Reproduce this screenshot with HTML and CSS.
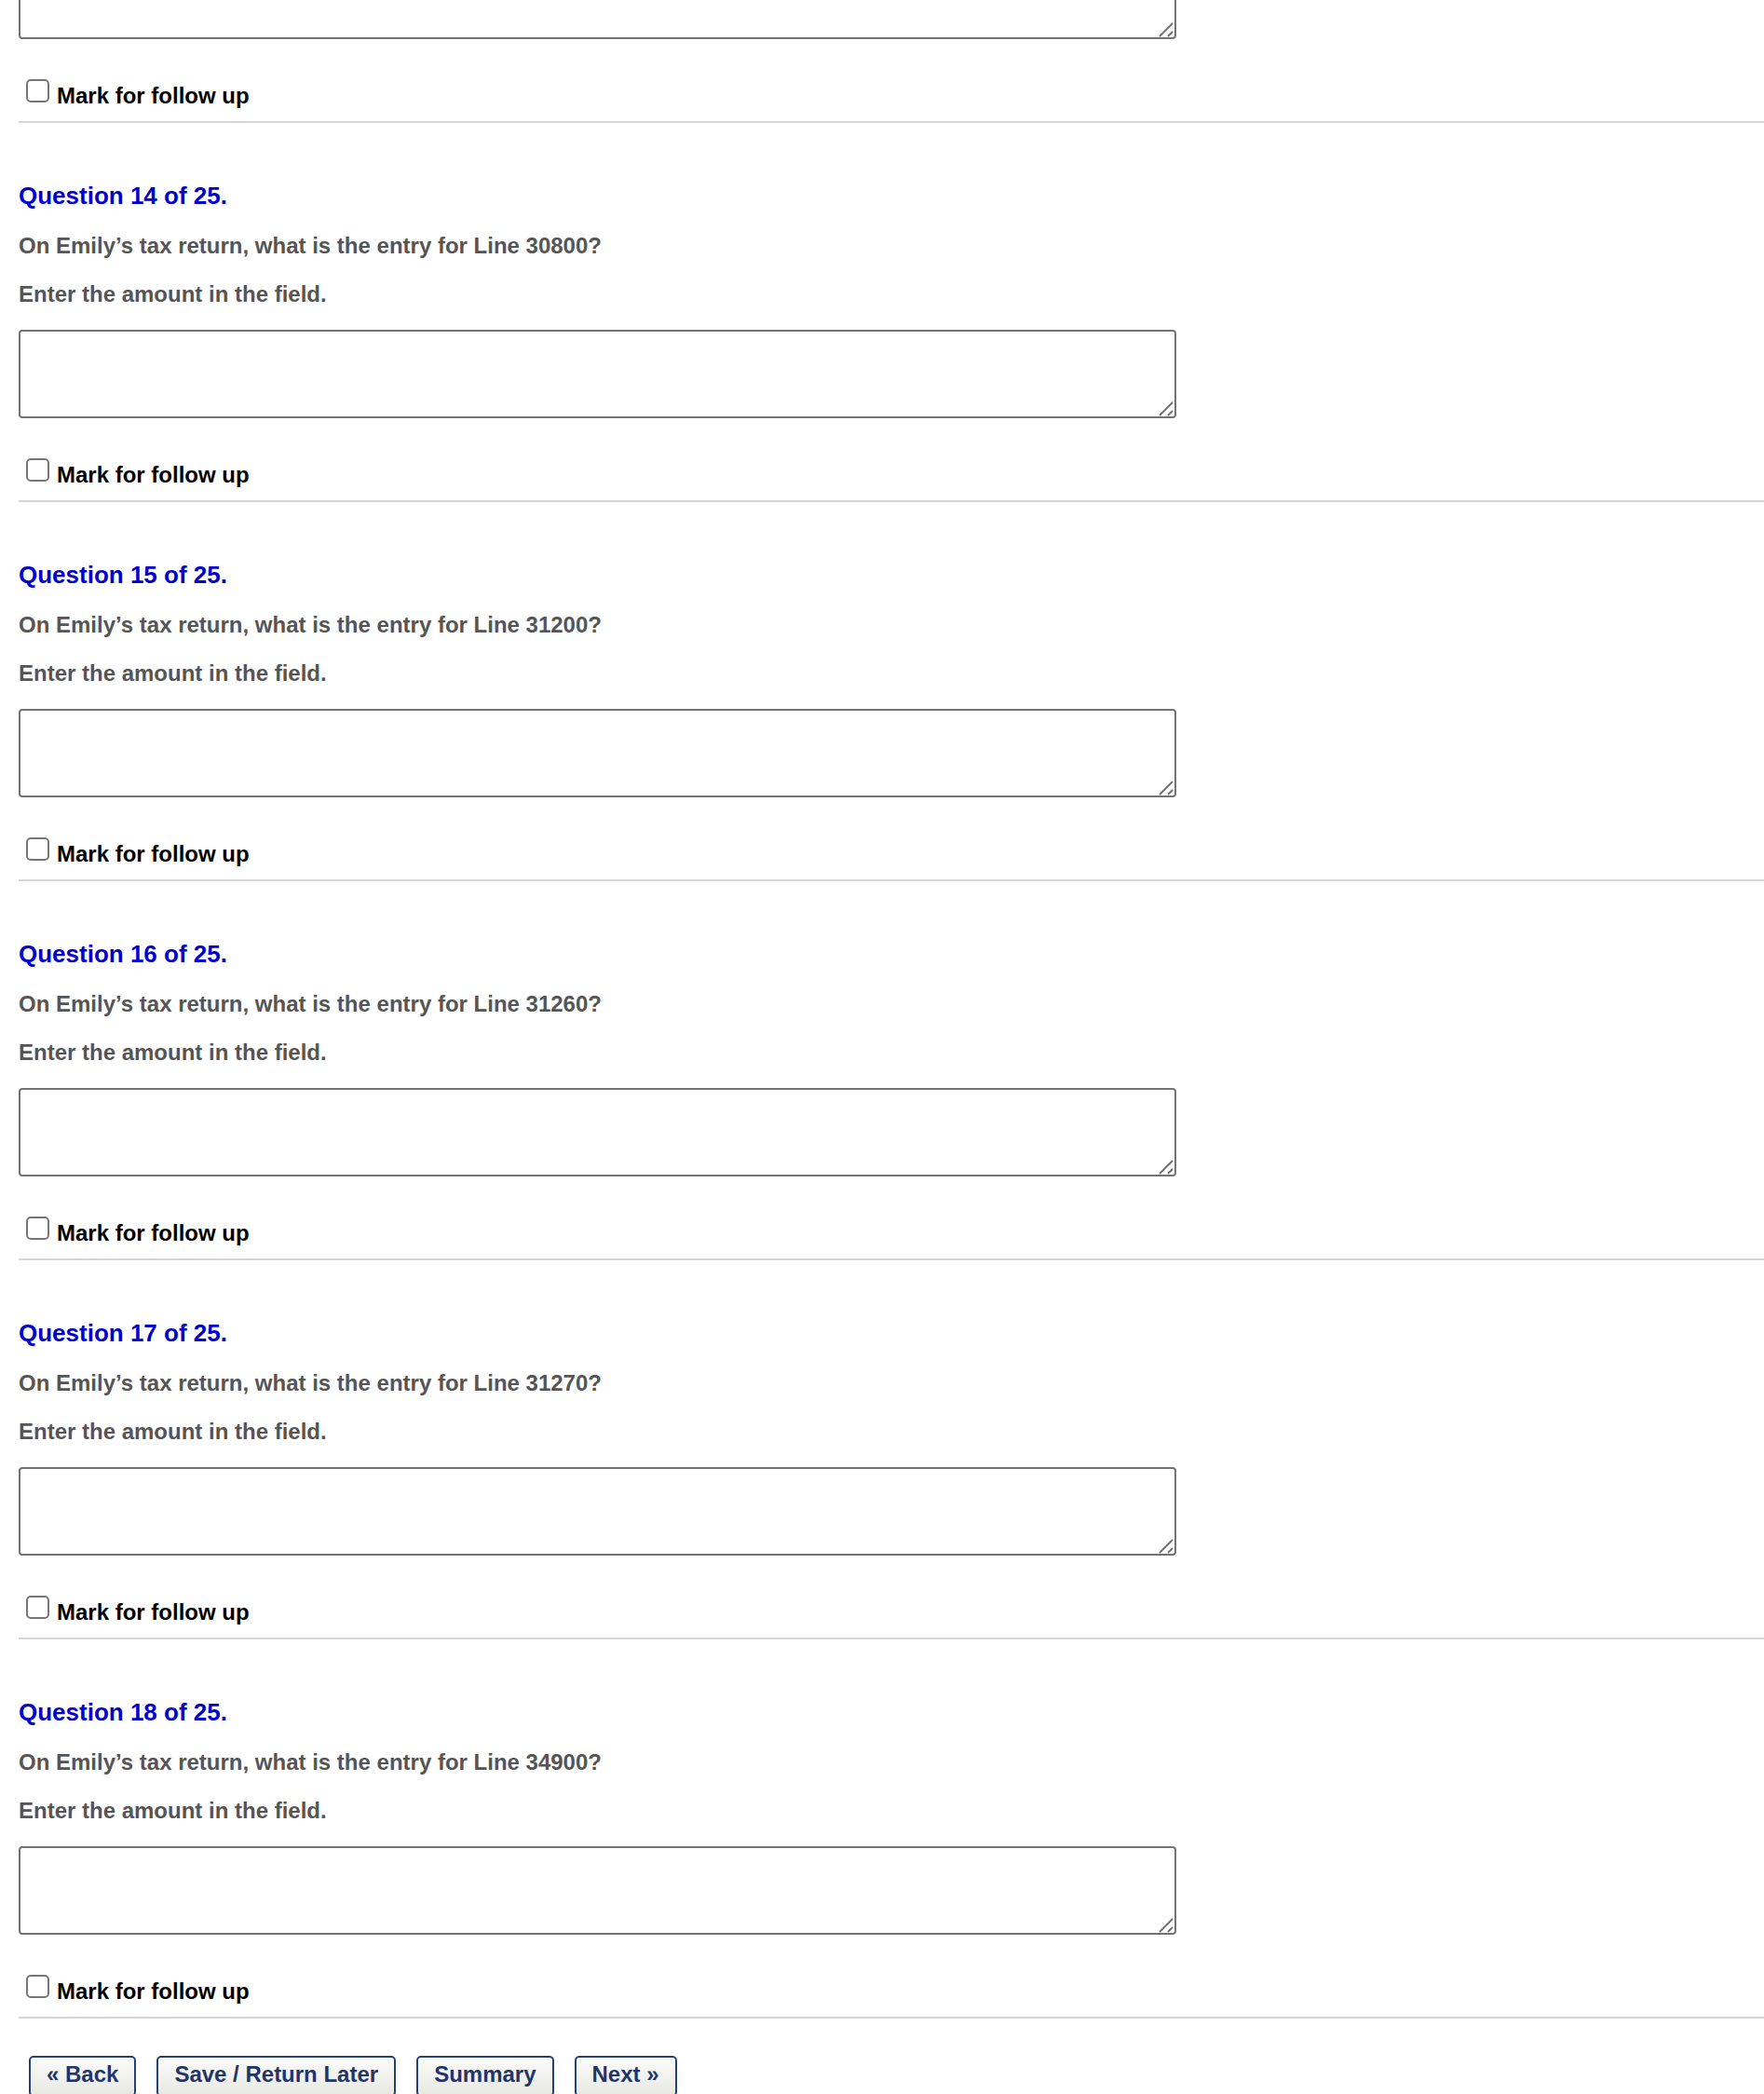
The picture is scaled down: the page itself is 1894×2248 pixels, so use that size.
FILE: index.html
```html
<!DOCTYPE html>
<html lang="en">
<head>
<meta charset="utf-8">
<title>Questions</title>
<link rel="stylesheet" href="styles.css">
</head>
<body>
<div class="page">
  <div class="question question-partial">
    <div class="field field-first">
      <textarea class="answer" aria-label="Answer 13"></textarea>
      <svg class="grip" width="16" height="16" viewBox="0 0 16 16" aria-hidden="true"><path d="M1 15 L15 1 M10 15 L15 10" stroke="#6f6f6f" stroke-width="1.8" fill="none"/></svg>
    </div>
    <label class="follow"><input type="checkbox" class="check"><span>Mark for follow up</span></label>
  </div>
  <hr class="rule">

  <div class="question">
    <h2 class="q-title">Question 14 of 25.</h2>
    <p class="q-text">On Emily’s tax return, what is the entry for Line 30800?</p>
    <p class="q-text q-inst">Enter the amount in the field.</p>
    <div class="field">
      <textarea class="answer" aria-label="Answer 14"></textarea>
      <svg class="grip" width="16" height="16" viewBox="0 0 16 16" aria-hidden="true"><path d="M1 15 L15 1 M10 15 L15 10" stroke="#6f6f6f" stroke-width="1.8" fill="none"/></svg>
    </div>
    <label class="follow"><input type="checkbox" class="check"><span>Mark for follow up</span></label>
  </div>
  <hr class="rule">

  <div class="question">
    <h2 class="q-title">Question 15 of 25.</h2>
    <p class="q-text">On Emily’s tax return, what is the entry for Line 31200?</p>
    <p class="q-text q-inst">Enter the amount in the field.</p>
    <div class="field">
      <textarea class="answer" aria-label="Answer 15"></textarea>
      <svg class="grip" width="16" height="16" viewBox="0 0 16 16" aria-hidden="true"><path d="M1 15 L15 1 M10 15 L15 10" stroke="#6f6f6f" stroke-width="1.8" fill="none"/></svg>
    </div>
    <label class="follow"><input type="checkbox" class="check"><span>Mark for follow up</span></label>
  </div>
  <hr class="rule">

  <div class="question">
    <h2 class="q-title">Question 16 of 25.</h2>
    <p class="q-text">On Emily’s tax return, what is the entry for Line 31260?</p>
    <p class="q-text q-inst">Enter the amount in the field.</p>
    <div class="field">
      <textarea class="answer" aria-label="Answer 16"></textarea>
      <svg class="grip" width="16" height="16" viewBox="0 0 16 16" aria-hidden="true"><path d="M1 15 L15 1 M10 15 L15 10" stroke="#6f6f6f" stroke-width="1.8" fill="none"/></svg>
    </div>
    <label class="follow"><input type="checkbox" class="check"><span>Mark for follow up</span></label>
  </div>
  <hr class="rule">

  <div class="question">
    <h2 class="q-title">Question 17 of 25.</h2>
    <p class="q-text">On Emily’s tax return, what is the entry for Line 31270?</p>
    <p class="q-text q-inst">Enter the amount in the field.</p>
    <div class="field">
      <textarea class="answer" aria-label="Answer 17"></textarea>
      <svg class="grip" width="16" height="16" viewBox="0 0 16 16" aria-hidden="true"><path d="M1 15 L15 1 M10 15 L15 10" stroke="#6f6f6f" stroke-width="1.8" fill="none"/></svg>
    </div>
    <label class="follow"><input type="checkbox" class="check"><span>Mark for follow up</span></label>
  </div>
  <hr class="rule">

  <div class="question">
    <h2 class="q-title">Question 18 of 25.</h2>
    <p class="q-text">On Emily’s tax return, what is the entry for Line 34900?</p>
    <p class="q-text q-inst">Enter the amount in the field.</p>
    <div class="field">
      <textarea class="answer" aria-label="Answer 18"></textarea>
      <svg class="grip" width="16" height="16" viewBox="0 0 16 16" aria-hidden="true"><path d="M1 15 L15 1 M10 15 L15 10" stroke="#6f6f6f" stroke-width="1.8" fill="none"/></svg>
    </div>
    <label class="follow"><input type="checkbox" class="check"><span>Mark for follow up</span></label>
  </div>
  <hr class="rule">

  <div class="nav">
    <button class="btn" type="button">« Back</button>
    <button class="btn" type="button">Save / Return Later</button>
    <button class="btn" type="button">Summary</button>
    <button class="btn" type="button">Next »</button>
  </div>
</div>
</body>
</html>
```
FILE: styles.css
```css
html, body {
  margin: 0;
  padding: 0;
  background: #ffffff;
}

body {
  font-family: "Liberation Sans", Arial, Helvetica, sans-serif;
  font-weight: bold;
  overflow: hidden;
}

.page {
  padding-left: 20px;
}

.question {
  display: flex;
  flex-direction: column;
  align-items: flex-start;
}

.q-title {
  margin: 0;
  font-size: 26px;
  line-height: 30px;
  font-weight: bold;
  color: #0000cc;
}

.q-text {
  margin: 25px 0 0 0;
  font-size: 24px;
  line-height: 28px;
  color: #555555;
}

.q-inst {
  margin-top: 24px;
}

.field {
  position: relative;
  margin-top: 24px;
  width: 1243px;
  height: 95px;
}

.field-first {
  margin-top: -53px;
}

.answer {
  box-sizing: border-box;
  display: block;
  margin: 0;
  width: 100%;
  height: 100%;
  border: 2px solid #737373;
  border-radius: 4px;
  background: #ffffff;
  font-family: "Liberation Sans", Arial, sans-serif;
  font-size: 24px;
  padding: 4px 6px;
  resize: none;
}

.grip {
  position: absolute;
  right: 3px;
  bottom: 2px;
  pointer-events: none;
}

.follow {
  display: flex;
  align-items: flex-start;
  gap: 8px;
  margin-top: 43px;
  margin-left: 8px;
  font-size: 24px;
  line-height: 28px;
  color: #000000;
}

.follow span {
  margin-top: 4px;
}

.check {
  appearance: none;
  -webkit-appearance: none;
  box-sizing: border-box;
  width: 25px;
  height: 25px;
  margin: 0;
  border: 2px solid #767676;
  border-radius: 5px;
  background: #ffffff;
}

.rule {
  margin: 13px 0 63px 0;
  height: 2px;
  border: 0;
  background: #d6d6d6;
}

.rule:last-of-type {
  margin-bottom: 40px;
}

.nav {
  display: flex;
  gap: 22px;
  margin-left: 11px;
}

.btn {
  font-family: "Liberation Sans", Arial, sans-serif;
  font-weight: bold;
  font-size: 24px;
  line-height: 28px;
  color: #233567;
  padding: 4px 17px 8px;
  border: 2px solid #24427a;
  border-radius: 5px;
  background: linear-gradient(#fbfbf9, #e8e8e3);
  box-shadow: inset 0 1px 0 #ffffff;
  cursor: pointer;
}
```
